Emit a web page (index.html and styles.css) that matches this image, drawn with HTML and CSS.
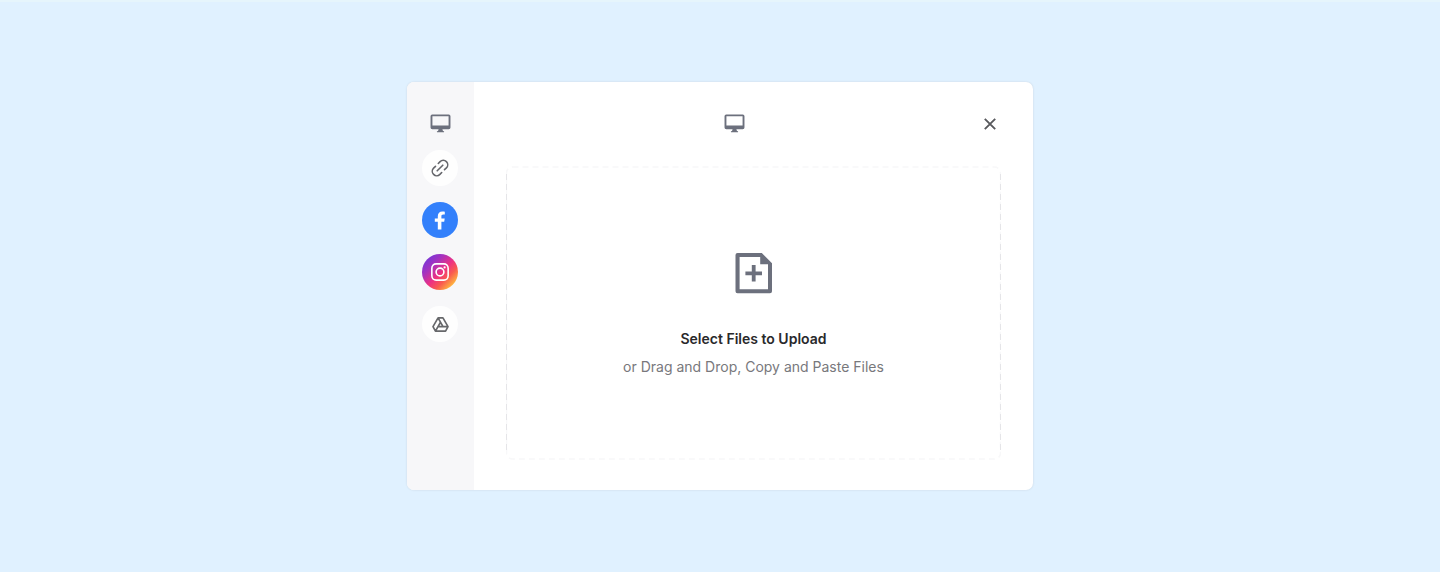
FILE: index.html
```
<!DOCTYPE html>
<html lang="en">
<head>
<meta charset="utf-8">
<title>Upload Files</title>
<link rel="stylesheet" href="styles.css">
</head>
<body>
<div class="page">
  <div class="dialog">
    <nav class="sources">
      <span class="source source-device">
        <svg width="21" height="19" viewBox="0 0 22 20"><path fill="#6c707d" fill-rule="evenodd" d="M2.300.5h17.400a1.800 1.800 0 0 1 1.800 1.800v11.900a1.800 1.800 0 0 1-1.800 1.800H13l.5 1.600 1.300.8v.9H7.200v-.9l1.300-.8L9 16H2.300a1.800 1.800 0 0 1-1.800-1.800V2.300A1.800 1.800 0 0 1 2.300.5zM2.500 2.400v9.700h17V2.400z"/></svg>
      </span>
      <span class="source source-white">
        <svg width="18" height="18" viewBox="0 0 18 18" fill="none" stroke="#65666b" stroke-width="1.600" stroke-linecap="round"><path d="M6.200 11.800l5.600-5.600M7.300 4.500l1.800-1.900a4.450 4.450 0 0 1 6.300 6.300l-1.900 1.800M10.700 13.500l-1.800 1.900a4.450 4.450 0 0 1-6.300-6.300l1.900-1.800"/></svg>
      </span>
      <span class="source source-facebook">
        <svg width="12" height="19" viewBox="0 0 12 19"><path fill="#fff" d="M3.800 18.500v-7.700H.8V7.500h3V5.200C3.800 2.100 5.600.5 8.300.5c1.300 0 2.500.2 2.500.2v2.900H9.300c-1.500 0-1.900.8-1.900 1.800v2.100h3.300l-.5 3.300H7.400v7.700z"/></svg>
      </span>
      <span class="source source-instagram">
        <svg width="18" height="18" viewBox="0 0 18 18" fill="none" stroke="#fff" stroke-width="1.600"><rect x=".85" y=".85" width="16.300" height="16.300" rx="4.300"/><circle cx="9" cy="9" r="3.900"/><circle cx="13.600" cy="4.400" r="1.100" fill="#fff" stroke="none"/></svg>
      </span>
      <span class="source source-white">
        <svg width="17" height="15" viewBox="0 0 18 16" fill="none" stroke="#67686b" stroke-width="1.800" stroke-linejoin="round"><path d="M6.400 1h5.200L17 10.300 14.400 15H3.600L1 10.300zM6.400 1l5.300 9.300M3.600 15l5.400-9.400M6.300 10.300H17"/></svg>
      </span>
    </nav>
    <main class="panel">
      <header class="panel-head">
        <div class="panel-title">
          <svg width="21" height="19" viewBox="0 0 22 20"><path fill="#6c707d" fill-rule="evenodd" d="M2.300.5h17.400a1.800 1.800 0 0 1 1.800 1.800v11.900a1.800 1.800 0 0 1-1.800 1.800H13l.5 1.600 1.300.8v.9H7.200v-.9l1.300-.8L9 16H2.300a1.800 1.800 0 0 1-1.800-1.800V2.300A1.800 1.800 0 0 1 2.300.5zM2.500 2.400v9.700h17V2.400z"/></svg>
        </div>
        <button class="close" aria-label="Close">
          <svg width="12" height="12" viewBox="0 0 12 12" stroke="#58595d" stroke-width="1.900"><path d="M.8.8l10.400 10.400M11.200.8L.8 11.200"/></svg>
        </button>
      </header>
      <section class="dropzone">
        <svg class="outline" width="495" height="294" viewBox="0 0 495 294" fill="none"><rect class="outline-base" x=".5" y="1" width="494" height="292" rx="6"/><path class="outline-side" d="M.5 8v280M494.500 8v280"/></svg>
        <svg class="file-icon" width="38" height="42" viewBox="0 0 38 42" fill="#6c707d"><path fill-rule="evenodd" d="M2.500 1h24.300L37 11.300v27.900a2 2 0 0 1-2 2H2.500a2 2 0 0 1-2-2V3a2 2 0 0 1 2-2zM4.600 4.900v32.400H33V12.300h-7.800V4.900z"/><path d="M16.800 13h3.800v6.400h6.400v3.800h-6.400v6.400h-3.800v-6.400h-6.400v-3.800h6.400z"/></svg>
        <h1 class="drop-title">Select Files to Upload</h1>
        <p class="drop-hint">or Drag and Drop, Copy and Paste Files</p>
      </section>
    </main>
  </div>
</div>
</body>
</html>
```
FILE: styles.css
```
* { box-sizing: border-box; }
body { margin: 0; font-family: Inter, "Liberation Sans", sans-serif; }
svg { display: block; }
.page {
  height: 572px;
  padding: 80px 0 0 407px;
  background: #e0f1ff;
  border-top: 2px solid #e6f5fc;
}
.dialog {
  display: flex;
  width: 626px;
  height: 408px;
  border-radius: 7px;
  background: #fff;
  overflow: hidden;
  box-shadow: 0 0 2px rgba(90, 80, 70, .18);
}
.sources {
  display: flex;
  flex-direction: column;
  align-items: center;
  gap: 16px;
  width: 67px;
  padding: 30.400px 1px 0 0;
  background: #f7f7f9;
}
.source {
  display: flex;
  align-items: center;
  justify-content: center;
  width: 36px;
  height: 36px;
  border-radius: 50%;
}
.source-device { height: 22px; }
.source-white { background: #fefefe; }
.source-facebook { background: #3380fb; }
.source-instagram { background: linear-gradient(135deg, #6937df 5%, #a332c0 30%, #ed3183 52%, #f95a4f 68%, #ffc13c 88%); }
.panel { flex: 1; padding: 30px 32px; }
.panel-head { display: flex; align-items: center; height: 23px; }
.panel-title { display: flex; flex: 1; justify-content: center; }
.close {
  display: flex;
  align-items: center;
  justify-content: center;
  width: 22px;
  height: 22px;
  margin-left: 16px;
  padding: 0;
  border: 0;
  background: none;
}
.dropzone {
  position: relative;
  display: flex;
  flex-direction: column;
  align-items: center;
  width: 495px;
  height: 294px;
  margin-top: 31px;
  padding-top: 86px;
}
.outline { position: absolute; left: 0; top: 0; }
.outline-base { stroke: #f8f8f9; stroke-width: 1.500; stroke-dasharray: 6 4; }
.outline-side { stroke: #e5e5e8; stroke-dasharray: 6 4; }
.drop-title {
  margin: 34px 0 0;
  color: #29292b;
  font-size: 14px;
  font-weight: 600;
  line-height: 22px;
}
.drop-hint {
  margin: 6px 0 0;
  color: #78787c;
  font-size: 14px;
  line-height: 22px;
}
```
